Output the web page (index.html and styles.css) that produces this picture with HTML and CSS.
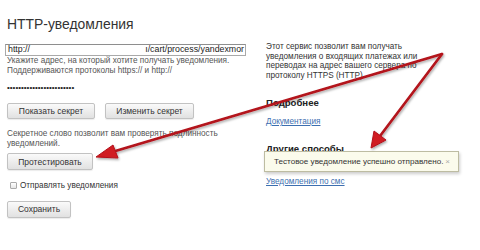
FILE: index.html
```html
<!DOCTYPE html>
<html lang="ru">
<head>
<meta charset="utf-8">
<link rel="stylesheet" href="styles.css">
</head>
<body>
<div class="page">
  <div class="left">
    <h1 class="title">HTTP-уведомления</h1>
    <div class="url-input"><span class="url-start">http://</span><span class="url-end">ı/cart/process/yandexmor</span></div>
    <p class="hint">Укажите адрес, на который хотите получать уведомления.<br>Поддерживаются протоколы https:// и http://</p>
    <div class="secret-dots">••••••••••••••••••••••••</div>
    <div class="btn-row">
      <button class="btn btn-show">Показать секрет</button>
      <button class="btn btn-change">Изменить секрет</button>
    </div>
    <p class="hint secret-hint">Секретное слово позволит вам проверять подлинность<br>уведомлений.</p>
    <button class="btn btn-test">Протестировать</button>
    <label class="check-row"><span class="checkbox"></span>Отправлять уведомления</label>
    <button class="btn btn-save">Сохранить</button>
  </div>
  <div class="right">
    <p class="about">Этот сервис позволит вам получать<br>уведомления о входящих платежах или<br>переводах на адрес вашего сервера по<br>протоколу HTTPS (HTTP).</p>
    <h2 class="subhead subhead-more">Подробнее</h2>
    <a class="link" href="#">Документация</a>
    <h2 class="subhead subhead-other">Другие способы</h2>
    <a class="link link-sms" href="#">Уведомления по смс</a>
  </div>
  <div class="toast">Тестовое уведомление успешно отправлено.<span class="toast-close">×</span></div>
  <svg class="arrows" width="480" height="250" viewBox="0 0 480 250">
    <defs>
      <filter id="sh" x="-20%" y="-20%" width="140%" height="140%">
        <feDropShadow dx="1" dy="1.5" stdDeviation="1.2" flood-color="#000" flood-opacity="0.35"/>
      </filter>
    </defs>
    <g filter="url(#sh)" fill="#d01b21" stroke="#b3121a">
      <line x1="442" y1="54" x2="112" y2="152" stroke-width="2.6" stroke-linecap="round"/>
      <polygon points="96,157 113,145 118,158" stroke-width="1" stroke-linejoin="round"/>
      <line x1="442" y1="54" x2="380" y2="136" stroke-width="2.6" stroke-linecap="round"/>
      <polygon points="371,148 374,131 386,140" stroke-width="1" stroke-linejoin="round"/>
    </g>
  </svg>
</div>
</body>
</html>
```

FILE: styles.css
```css
* { box-sizing: border-box; }
html, body { margin: 0; padding: 0; background: #fff; }
body {
  font-family: "Liberation Sans", Arial, sans-serif;
  color: #333;
  font-size: 8.2px;
  line-height: 9.5px;
}
.page {
  position: relative;
  width: 480px;
  height: 250px;
  display: flex;
  overflow: hidden;
}
.left {
  width: 258px;
  padding: 0 0 0 6px;
  display: flex;
  flex-direction: column;
  align-items: flex-start;
}
.title {
  margin: 15px 0 0 1px;
  font-size: 13.9px;
  line-height: 18px;
  font-weight: normal;
  color: #333;
}
.url-input {
  margin-top: 11px;
  margin-left: -1px;
  width: 241px;
  height: 12px;
  border: 1px solid #a9a9a9;
  border-top-color: #8e8e8e;
  display: flex;
  justify-content: space-between;
  align-items: center;
  padding: 0 1px 0 2px;
  font-size: 8.8px;
  color: #222;
  overflow: hidden;
  white-space: nowrap;
}
.hint {
  margin: 0 0 0 1px;
  color: #555;
  line-height: 9.5px;
  white-space: nowrap;
}
.secret-dots {
  margin: 8px 0 0 1px;
  font-size: 8px;
  letter-spacing: 0;
  color: #222;
  line-height: 10px;
  white-space: nowrap;
}
.btn {
  font-family: "Liberation Sans", Arial, sans-serif;
  font-size: 8.5px;
  color: #333;
  height: 16px;
  padding: 0;
  border: 1px solid #c2c2c2;
  border-radius: 2px;
  background: linear-gradient(#fafafa, #e1e1e1);
  box-shadow: 0 1px 1px rgba(0,0,0,0.08);
  line-height: 14px;
  white-space: nowrap;
  cursor: pointer;
}
.btn-row {
  margin: 10px 0 0 1px;
  display: flex;
  gap: 10px;
}
.btn-show { width: 88px; }
.btn-change { width: 89px; }
.secret-hint { margin-top: 10px; }
.btn-test { margin: 5px 0 0 1px; width: 86px; height: 17px; }
.check-row {
  margin: 11px 0 0 4px;
  display: flex;
  align-items: center;
  gap: 3px;
  color: #333;
  white-space: nowrap;
}
.checkbox {
  width: 7px;
  height: 7px;
  border: 1px solid #aaa;
  border-radius: 1px;
  background: linear-gradient(#fff, #e6e6e6);
}
.btn-save { margin: 10px 0 0 1px; width: 64px; height: 17px; }
.right {
  padding-left: 8px;
  display: flex;
  flex-direction: column;
  align-items: flex-start;
}
.about {
  margin: 42px 0 0 0;
  line-height: 9.5px;
  color: #333;
  white-space: nowrap;
}
.subhead {
  margin: 0;
  font-size: 9.6px;
  line-height: 12px;
  font-weight: bold;
  color: #222;
  white-space: nowrap;
}
.subhead-more { margin-top: 17px; }
.link {
  color: #3d6fb0;
  text-decoration: underline;
  line-height: 12px;
  margin-top: 7px;
  white-space: nowrap;
}
.subhead-other { margin-top: 15px; }
.link-sms { margin-top: 21px; }
.toast {
  position: absolute;
  left: 264px;
  top: 151px;
  width: 195px;
  height: 21px;
  padding: 0 0 0 9px;
  display: flex;
  align-items: center;
  background: #fbfbec;
  border: 1px solid #bdbca2;
  box-shadow: 1px 2px 3px rgba(0,0,0,0.2);
  color: #333;
  font-size: 8.1px;
  white-space: nowrap;
}
.toast-close {
  margin-left: auto;
  margin-right: 8px;
  color: #aaa;
  font-size: 8px;
}
.arrows {
  position: absolute;
  left: 0;
  top: 0;
  pointer-events: none;
}
```
